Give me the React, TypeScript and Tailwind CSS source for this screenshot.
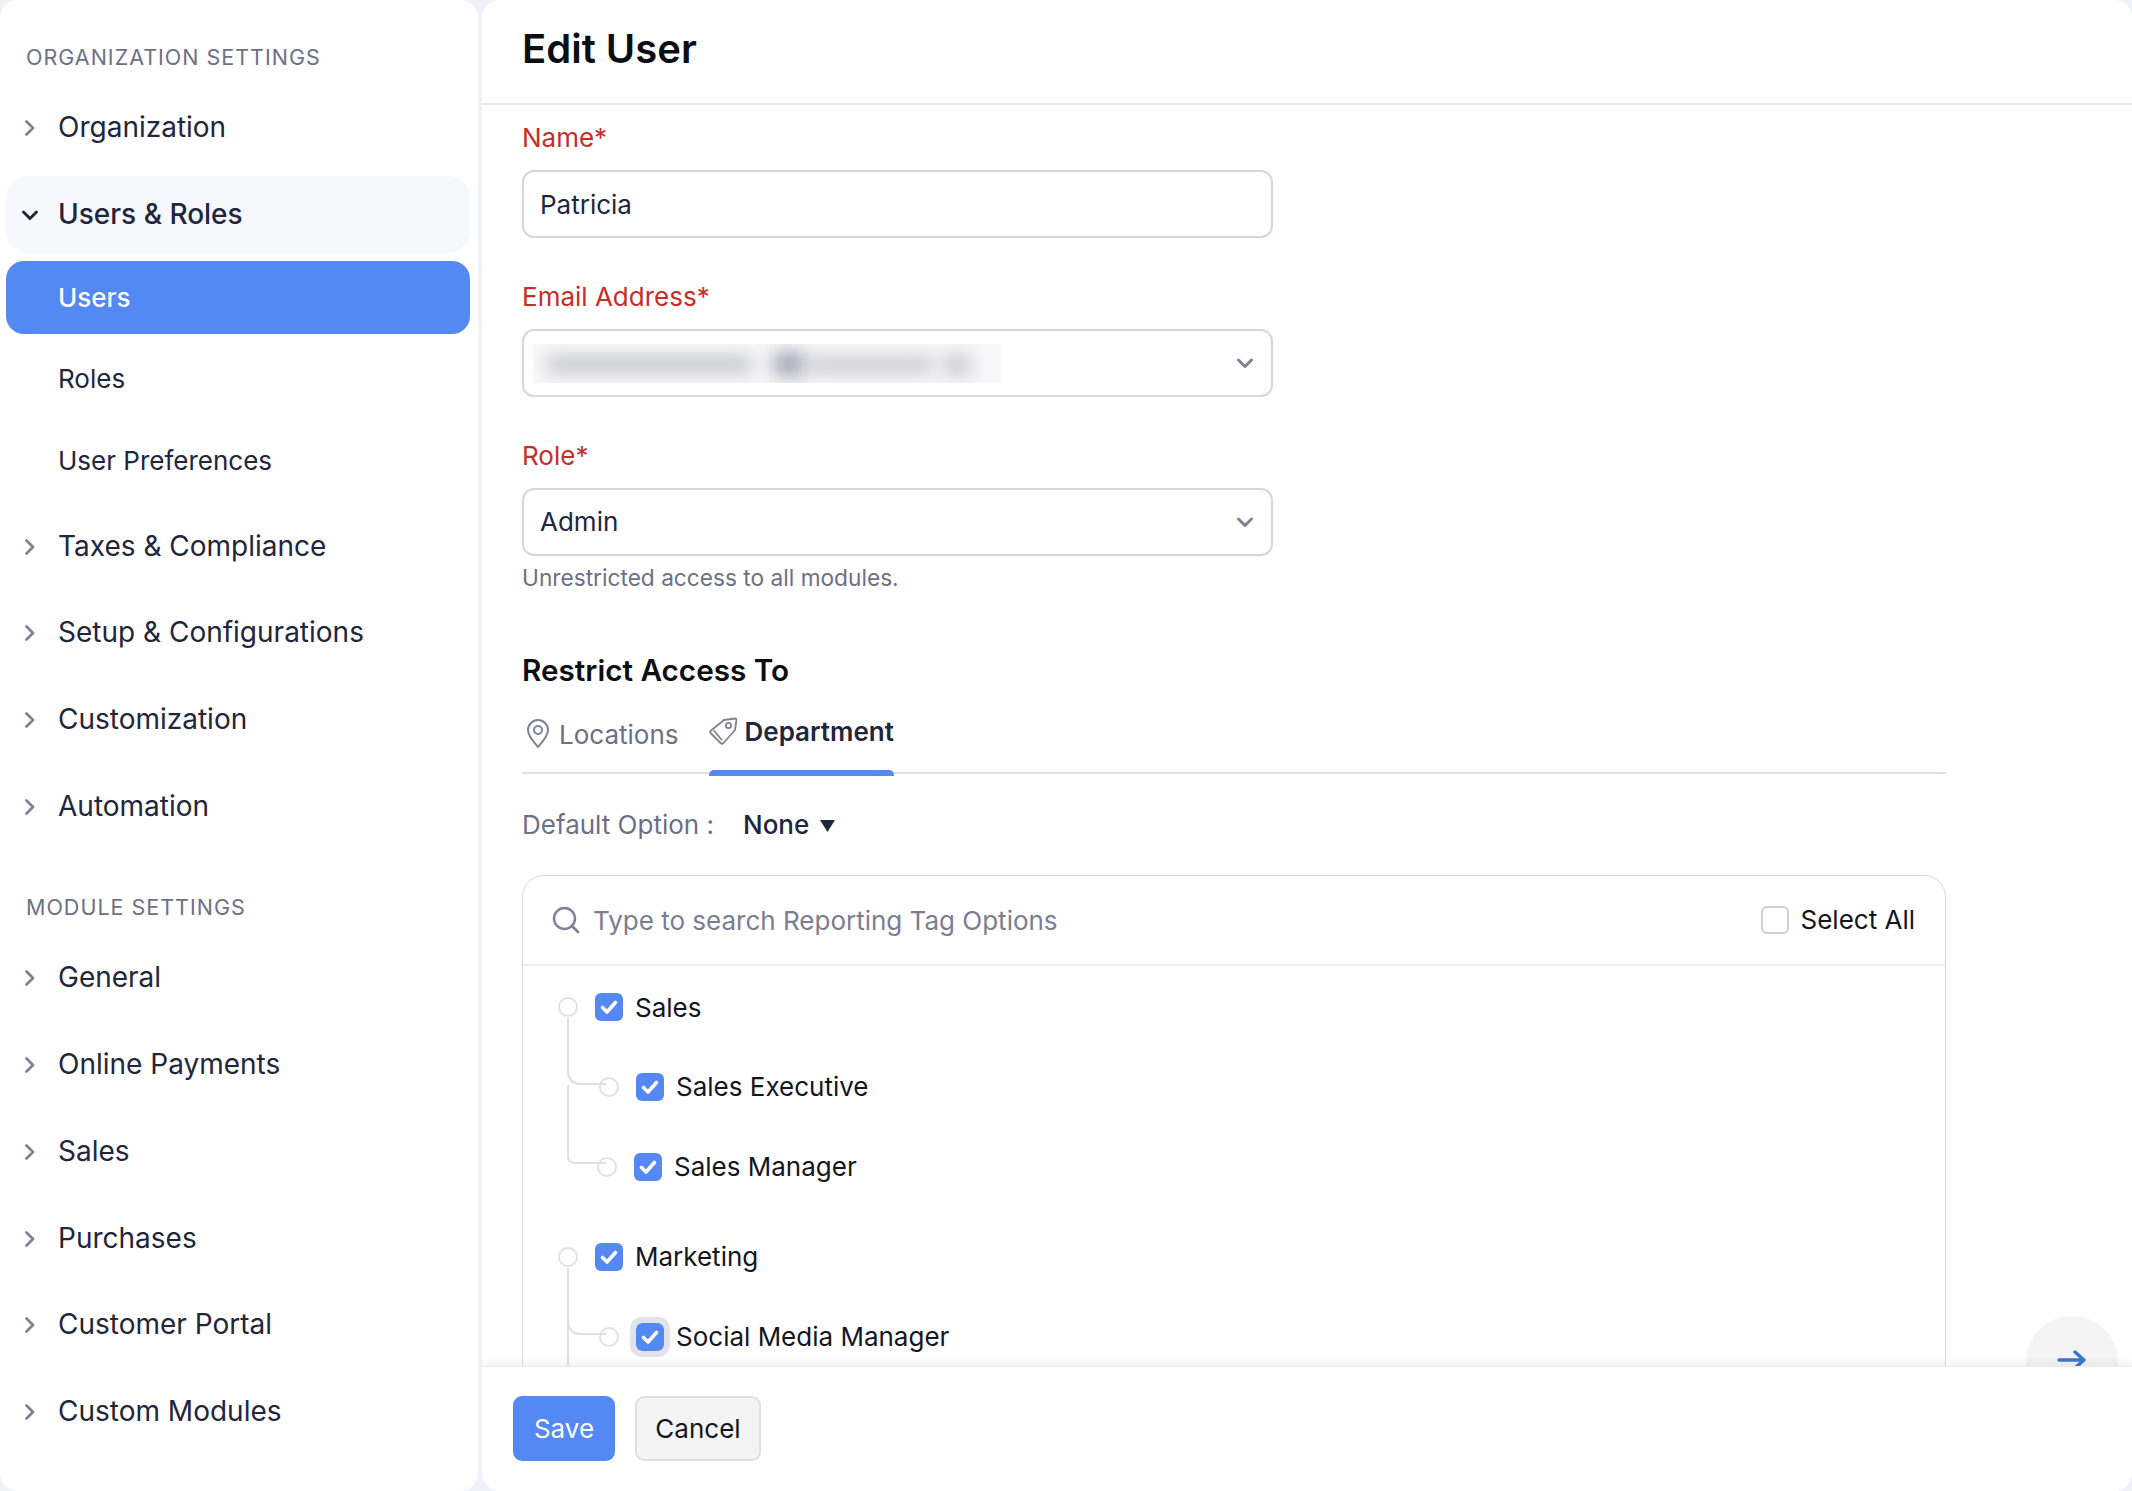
import React from "react";

function ChevronRight() {
  return (
    <svg width="12" height="18" viewBox="0 0 12 18" fill="none" className="block">
      <path d="M2.5 2.5 L9 9 L2.5 15.5" stroke="#7f8296" strokeWidth="2.8" strokeLinecap="round" strokeLinejoin="round" />
    </svg>
  );
}

function ChevronDown({ color = "#21263c", size = 18 }: { color?: string; size?: number }) {
  return (
    <svg width={size} height={size} viewBox="0 0 18 18" fill="none" className="block">
      <path d="M2.5 6 L9 12.5 L15.5 6" stroke={color} strokeWidth="3" strokeLinecap="round" strokeLinejoin="round" />
    </svg>
  );
}

function NavItem({ label, className = "" }: { label: string; className?: string }) {
  return (
    <div className={`flex items-center h-[77px] text-[28px] text-[#21263c] ${className}`}>
      <span className="w-[52px] pl-[18px] shrink-0">
        <ChevronRight />
      </span>
      <span className="pb-[2px]">{label}</span>
    </div>
  );
}

function SubItem({ label, className = "" }: { label: string; className?: string }) {
  return (
    <div className={`flex items-center h-[73px] pl-[52px] pb-[2px] text-[26px] text-[#21263c] ${className}`}>{label}</div>
  );
}

function Heading({ label, className = "" }: { label: string; className?: string }) {
  return (
    <div className={`h-[30px] pl-[20px] flex items-center text-[21.5px] tracking-[1px] text-[#6c7086] uppercase ${className}`}>
      {label}
    </div>
  );
}

function Field({ label, className = "", gap = "mb-[15px]", children }: { label: string; className?: string; gap?: string; children: React.ReactNode }) {
  return (
    <div className={className}>
      <div className={`h-[34px] pb-[2px] flex items-center text-[26px] text-[#c62d28] ${gap}`}>{label}</div>
      {children}
    </div>
  );
}

function Box({ children }: { children: React.ReactNode }) {
  return (
    <div className="relative flex items-center justify-between w-[751px] h-[68px] border-2 border-[#d5d6e2] rounded-[12px] pl-[16px] pr-[17px] text-[26px] text-[#21263c] bg-white">
      {children}
    </div>
  );
}

function Check({ ring = false }: { ring?: boolean }) {
  return (
    <span className={`w-[28px] h-[28px] shrink-0 rounded-[6px] bg-[#5488f2] flex items-center justify-center ${ring ? "outline-[6px] outline-[#e1e2ea]" : ""}`}>
      <svg width="20" height="20" viewBox="0 0 20 20" fill="none">
        <path d="M3.5 10.5 L8 15 L16.5 5.5" stroke="#fff" strokeWidth="3.6" strokeLinecap="round" strokeLinejoin="round" />
      </svg>
    </span>
  );
}

function Radio() {
  return <span className="w-[20px] h-[20px] shrink-0 rounded-full border-2 border-[#e2e2e6] bg-white" />;
}

function TreeRow({ label, indent, branch, ring, offset, textClass = "pb-[2px]" }: { label: string; indent: string; branch?: string; ring?: boolean; offset?: string; textClass?: string }) {
  return (
    <div className={`relative flex items-center h-[40px] ${indent}`}>
      {branch && (
        <svg width="40" height="120" viewBox="0 0 40 120" fill="none" className={`absolute top-[-70px] ${offset}`}>
          <path d={branch} stroke="#e0e0e4" strokeWidth="2" />
        </svg>
      )}
      <Radio />
      <span className="w-[17px]" />
      <Check ring={ring} />
      <span className={`ml-[12px] text-[26px] text-[#14161f] ${textClass}`}>{label}</span>
    </div>
  );
}

export default function App() {
  return (
    <div className="w-[2132px] h-[1491px] overflow-hidden flex gap-[4px] bg-[#f0f0f8] font-['Inter',sans-serif]">
      <aside className="w-[478px] h-full shrink-0 bg-white rounded-[18px] pl-[6px] pr-[8px] pt-[42px]">
        <Heading label="Organization Settings" />
        <NavItem label="Organization" className="mt-[17px]" />
        <div className="flex items-center h-[77px] mt-[10px] rounded-[22px] bg-[#f7f8fd] text-[28px] font-medium text-[#21263c]">
          <span className="w-[52px] pl-[15px] shrink-0">
            <ChevronDown />
          </span>
          <span className="pb-[2px]">Users &amp; Roles</span>
        </div>
        <div className="flex items-center h-[73px] mt-[8px] rounded-[18px] bg-[#5488f2] pl-[52px] text-[26px] font-medium text-white">Users</div>
        <SubItem label="Roles" className="mt-[9px]" />
        <SubItem label="User Preferences" className="mt-[9px]" />
        <NavItem label="Taxes & Compliance" className="mt-[10px]" />
        <NavItem label="Setup & Configurations" className="mt-[9px]" />
        <NavItem label="Customization" className="mt-[10px]" />
        <NavItem label="Automation" className="mt-[10px]" />
        <Heading label="Module Settings" className="mt-[47px]" />
        <NavItem label="General" className="mt-[17px]" />
        <NavItem label="Online Payments" className="mt-[10px]" />
        <NavItem label="Sales" className="mt-[10px]" />
        <NavItem label="Purchases" className="mt-[10px]" />
        <NavItem label="Customer Portal" className="mt-[9px]" />
        <NavItem label="Custom Modules" className="mt-[10px]" />
      </aside>

      <main className="flex-1 h-full bg-white rounded-[18px] flex flex-col overflow-hidden">
        <header className="h-[105px] shrink-0 border-b-2 border-[#e8e8f0] pl-[40px] pb-[5px] flex items-center">
          <h1 className="text-[40px] font-semibold text-[#0d0e12]">Edit User</h1>
        </header>

        <div className="relative flex-1 overflow-hidden pl-[40px] pt-[16px]">
          <Field label="Name*">
            <Box>Patricia</Box>
          </Field>
          <Field label="Email Address*" className="mt-[42px]">
            <Box>
              <div className="relative w-[468px] h-[39px] -ml-[7px] bg-[#f8f8fb] overflow-hidden">
                <div className="absolute left-[14px] top-[12px] w-[205px] h-[17px] bg-[#c2c2cd] blur-[9px]" />
                <div className="absolute left-[240px] top-[8px] w-[32px] h-[24px] bg-[#a6a6b5] blur-[9px]" />
                <div className="absolute left-[275px] top-[13px] w-[125px] h-[16px] bg-[#c6c6d0] blur-[9px]" />
                <div className="absolute left-[410px] top-[11px] w-[28px] h-[20px] bg-[#c6c6d0] blur-[9px]" />
              </div>
              <ChevronDown color="#7f8296" />
            </Box>
          </Field>
          <Field label="Role*" className="mt-[41px]" gap="mb-[16px] pt-[2px]">
            <Box>
              <span className="pb-[2px]">Admin</span>
              <ChevronDown color="#7f8296" />
            </Box>
          </Field>
          <div className="h-[34px] mt-[5px] flex items-center text-[22.7px] text-[#6c7086]">Unrestricted access to all modules.</div>

          <h2 className="mt-[55px] h-[40px] flex items-center text-[29.7px] font-semibold text-[#0d0e12]">Restrict Access To</h2>

          <div className="mt-[14px] w-[1424px] h-[70px] border-b-2 border-[#dfe0e8] flex items-start">
            <div className="flex items-center gap-[9px] h-[60px] ml-[4px] text-[26px] text-[#6c7086]">
              <svg width="24" height="30" viewBox="0 0 24 30" fill="none">
                <path d="M12 28 C8 23 2 17.5 2 11 A10 10 0 0 1 22 11 C22 17.5 16 23 12 28 Z" stroke="#7f8296" strokeWidth="2" strokeLinejoin="round" />
                <circle cx="12" cy="11" r="4" stroke="#7f8296" strokeWidth="2" />
              </svg>
              Locations
            </div>
            <div className="relative ml-[31px] flex items-center gap-[7px] h-[70px] pb-[16px] text-[26px] font-semibold text-[#21263c]">
              <svg width="28" height="28" viewBox="0 0 28 28" fill="none">
                <path d="M15 3 L26 1.5 Q27.5 1.5 27.5 3 L26 13 L14.5 26 Q13 27.5 11.5 26 L2 16.5 Q0.5 15 2 13.5 Z" stroke="#7f8296" strokeWidth="1.8" strokeLinejoin="round" />
                <circle cx="19.5" cy="8.5" r="2.6" stroke="#7f8296" strokeWidth="1.8" />
                <path d="M4.7 13.3 L13 23.3" stroke="#7f8296" strokeWidth="1.8" />
              </svg>
              Department
              <span className="absolute left-0 right-0 bottom-[-2px] h-[6px] rounded-t-[5px] bg-[#5488f2]" />
            </div>
          </div>

          <div className="mt-[32px] h-[36px] flex items-center text-[26px] text-[#6c7086]">
            <span className="w-[221px]">Default Option :</span>
            <span className="font-medium text-[#21263c]">None</span>
            <svg width="15" height="12" viewBox="0 0 15 12" className="ml-[11px] mt-[3px]">
              <path d="M0 0 H15 L7.5 12 Z" fill="#21263c" />
            </svg>
          </div>

          <div className="mt-[33px] w-[1424px] h-[600px] border border-[#d8d8e4] rounded-[22px] bg-white">
            <div className="h-[90px] border-b-2 border-[#eeeef5] flex items-center pl-[29px] pr-[30px]">
              <svg width="28" height="28" viewBox="0 0 28 28" fill="none" className="shrink-0">
                <circle cx="12.5" cy="12.5" r="10.5" stroke="#7f8296" strokeWidth="2.4" />
                <path d="M20 20 L26 26" stroke="#7f8296" strokeWidth="2.8" strokeLinecap="round" />
              </svg>
              <span className="ml-[13px] flex-1 text-[26px] text-[#7a7e92]">Type to search Reporting Tag Options</span>
              <span className="w-[28px] h-[28px] rounded-[6px] border-2 border-[#cfcfd6] bg-white" />
              <span className="ml-[12px] pb-[2px] text-[26px] text-[#14161f]">Select All</span>
            </div>
            <div className="pt-[21px] flex flex-col">
              <TreeRow label="Sales" indent="ml-[35px]" textClass="" />
              <div className="h-[40px]" />
              <TreeRow label="Sales Executive" indent="ml-[76px]" offset="left-[-33px]" branch="M2 21 V76 M2 76 Q4 87 14 87 H40" />
              <div className="h-[40px]" />
              <TreeRow label="Sales Manager" indent="ml-[74px]" offset="left-[-31px]" branch="M2 8 V80 Q2 86 10 86 H40" />
              <div className="h-[50px]" />
              <TreeRow label="Marketing" indent="ml-[35px]" />
              <div className="h-[40px]" />
              <TreeRow label="Social Media Manager" ring indent="ml-[76px]" offset="left-[-33px]" branch="M2 21 V120 M2 76 Q4 87 14 87 H40" />
            </div>
          </div>

          <button className="absolute right-[14px] top-[1211px] w-[92px] h-[92px] rounded-full bg-[#f4f4f5] flex items-start justify-center pt-[33px]">
            <svg width="30" height="22" viewBox="0 0 30 22" fill="none">
              <path d="M2 11 H27 M18 3 L27 11 L18 19" stroke="#3f75cc" strokeWidth="3.4" strokeLinecap="round" strokeLinejoin="round" />
            </svg>
          </button>
        </div>

        <footer className="relative z-10 h-[125px] shrink-0 bg-white border-t border-[#ececef] shadow-[0_-4px_8px_rgba(0,0,0,0.05)] pl-[31px] pt-[29px] flex gap-[20px]">
          <button className="w-[102px] h-[65px] rounded-[9px] bg-[#5488f2] text-white text-[26px]">Save</button>
          <button className="w-[126px] h-[65px] rounded-[9px] bg-[#f4f4f5] border-2 border-[#dfdfe3] text-[#14161f] text-[26px]">Cancel</button>
        </footer>
      </main>
    </div>
  );
}
